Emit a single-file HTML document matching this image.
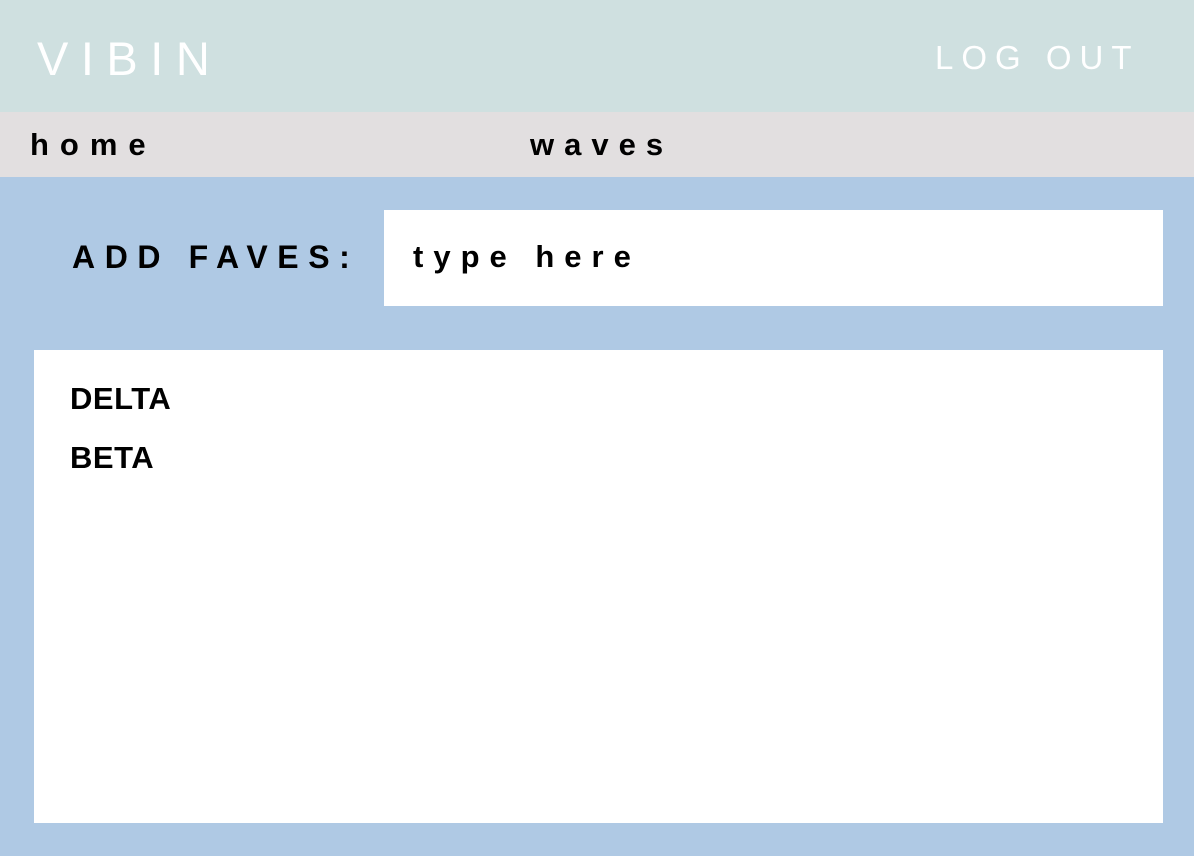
<!DOCTYPE html>
<html><head><style>
*{margin:0;padding:0;box-sizing:border-box}
body{width:1194px;height:856px;background:#afc9e4;font-family:"Liberation Sans",Arial,sans-serif;position:relative;overflow:hidden}
.hdr{position:absolute;left:0;top:0;width:1194px;height:112px;background:#cfe0e0}
.logo{position:absolute;left:37px;top:31px;font-size:47px;color:#fff;letter-spacing:12.5px;font-weight:300;line-height:56px}
.out{position:absolute;left:935px;top:38px;font-size:33px;color:#fff;letter-spacing:8px;line-height:40px}
.nav{position:absolute;left:0;top:112px;width:1194px;height:65px;background:#e2dfe0}
.nav span{position:absolute;top:15px;font-size:31px;font-weight:bold;line-height:36px}
.lbl{position:absolute;left:72px;top:238px;font-size:32px;font-weight:bold;letter-spacing:9.6px;line-height:38px}
.inp{position:absolute;left:384px;top:210px;width:779px;height:96px;background:#fff}
.inp span{position:absolute;left:29px;top:28px;font-size:31px;font-weight:bold;letter-spacing:10px;line-height:38px}
.box{position:absolute;left:34px;top:350px;width:1129px;height:473px;background:#fff}
.box div{position:absolute;left:36px;font-size:31px;font-weight:bold;letter-spacing:0.5px;line-height:36px}
</style></head><body>
<div class="hdr"><div class="logo">VIBIN</div><div class="out">LOG OUT</div></div>
<div class="nav"><span style="left:30px;letter-spacing:11px">home</span><span style="left:530px;letter-spacing:10px">waves</span></div>
<div class="lbl">ADD FAVES:</div>
<div class="inp"><span>type here</span></div>
<div class="box"><div style="top:31px">DELTA</div><div style="top:90px">BETA</div></div>
</body></html>
